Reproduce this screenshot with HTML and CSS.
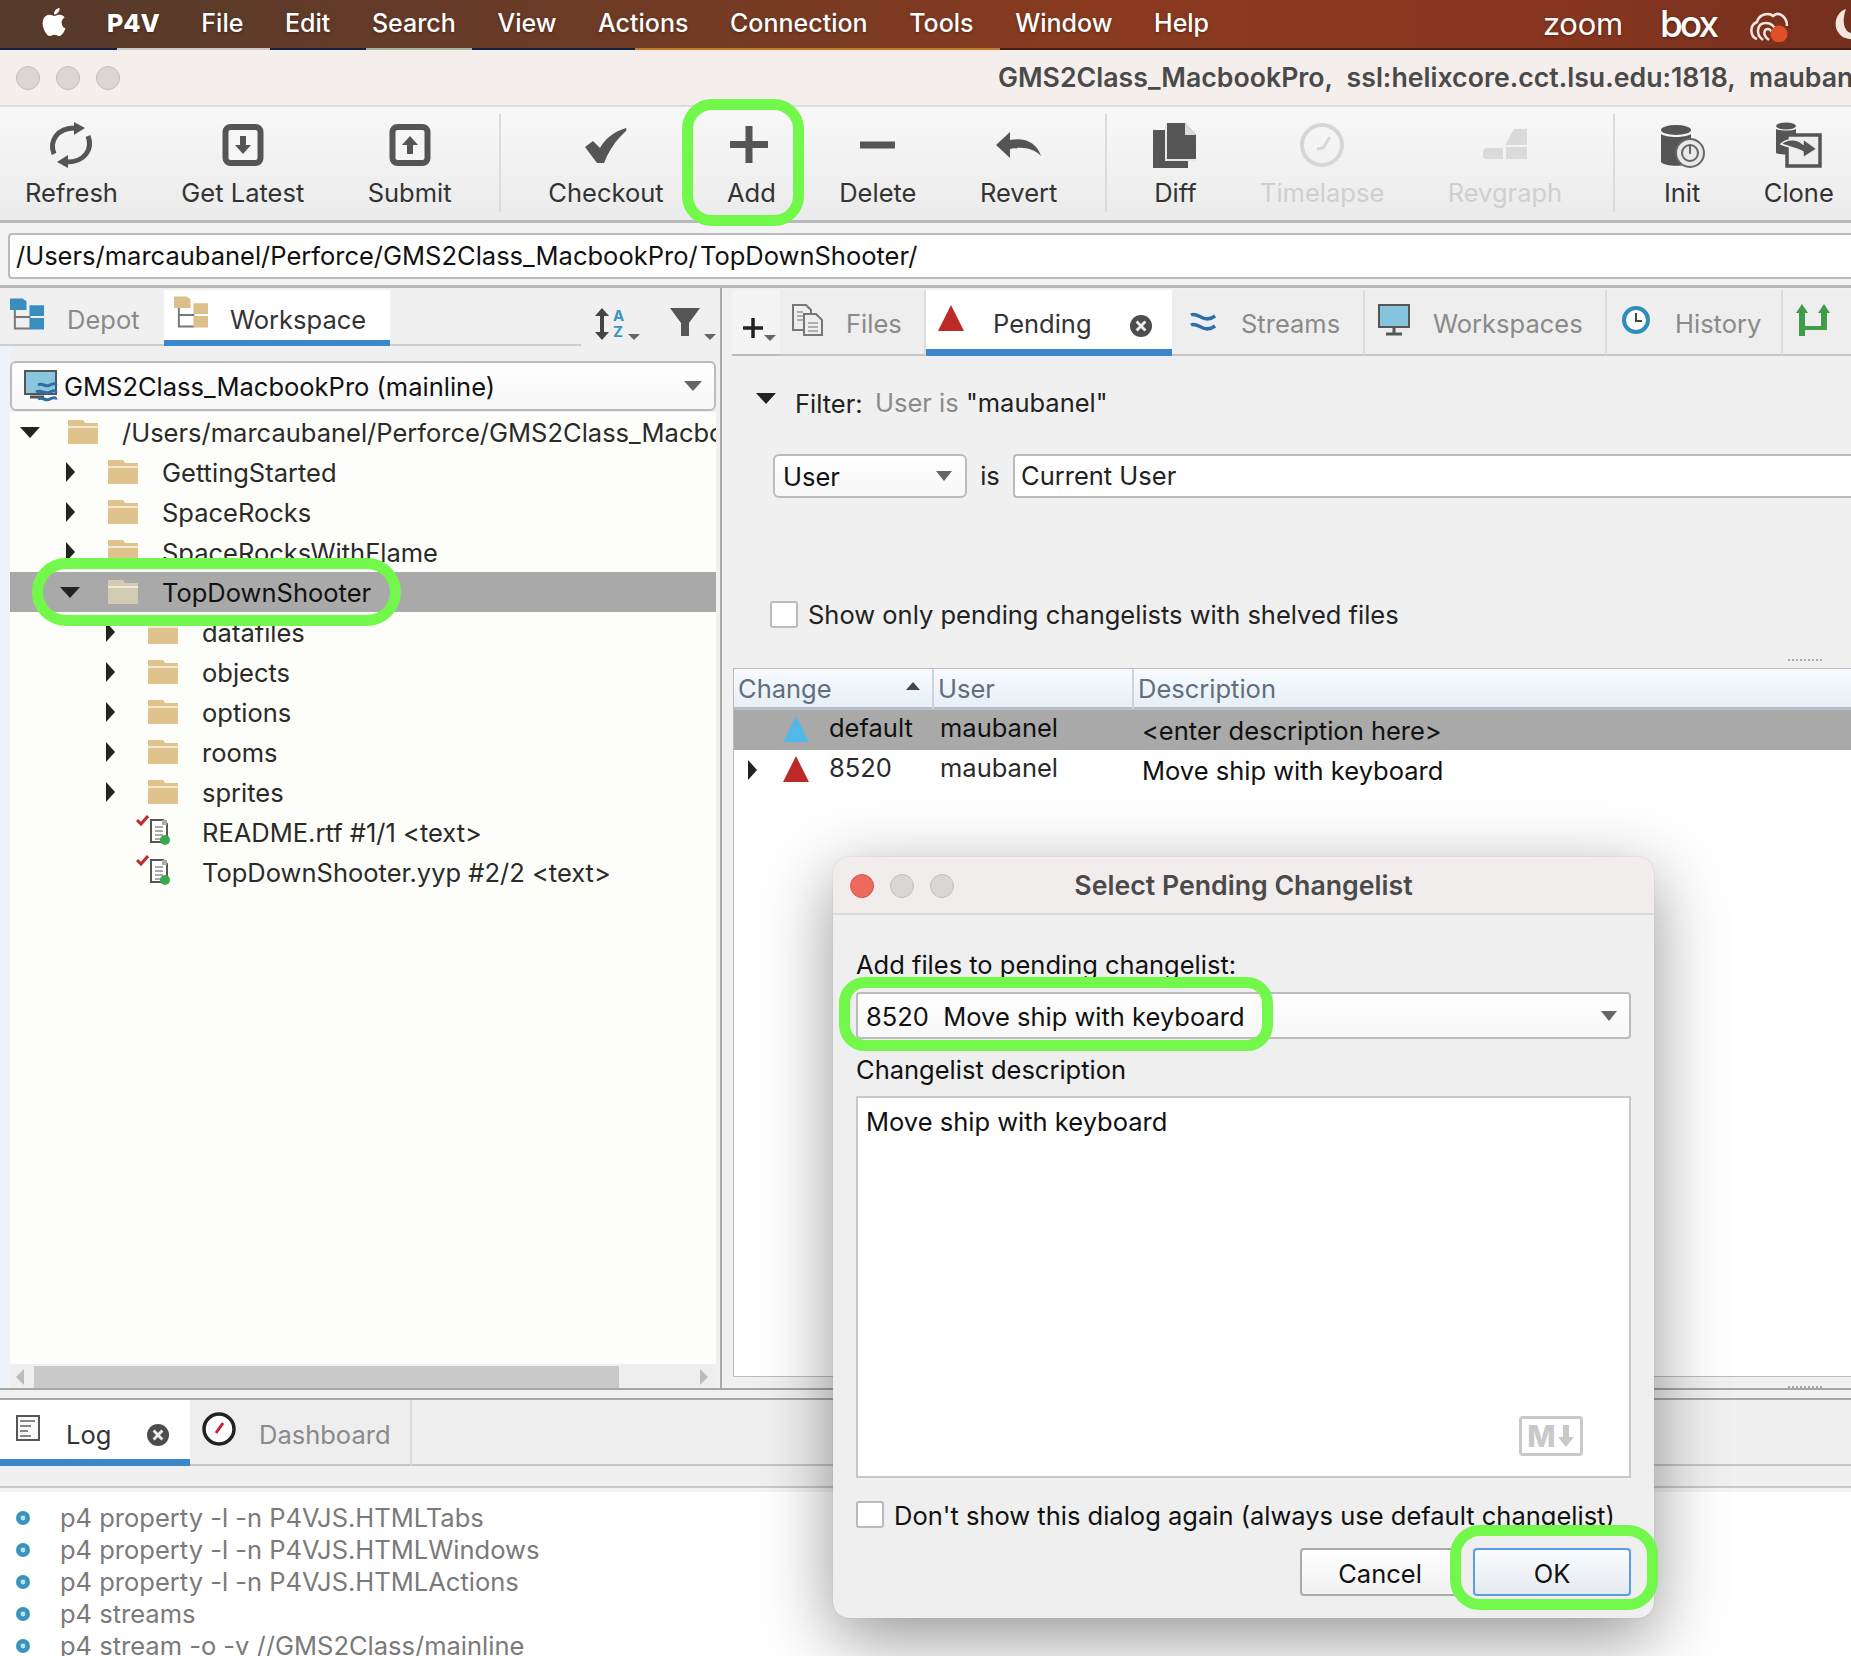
FILE: index.html
```html
<!DOCTYPE html>
<html lang="en">
<head>
  <meta charset="UTF-8" />
  <title>P4V</title>
  <link rel="stylesheet" href="styles.css">
</head>
<body>
  <svg class="sprites" xmlns="http://www.w3.org/2000/svg">
    <symbol id="folder" viewBox="0 0 30 24">
      <path d="M0 0h15l2 3h13v21H0z" fill="currentColor"/>
      <rect x="0" y="6" width="30" height="2" fill="#f3e8d2"/>
    </symbol>
    <symbol id="file" viewBox="0 0 34 36">
      <path d="M15 6h12l4 4v18H15z" fill="#fff" stroke="#555" stroke-width="2"/>
      <path d="M26 6h5v5h-5z" fill="#aaa"/>
      <path d="M19 13h8M19 17h8M19 21h8M19 25h6" stroke="#aaa" stroke-width="2"/>
      <path d="M1 6l4 4 7-8" fill="none" stroke="#c0282d" stroke-width="3"/>
      <circle cx="29" cy="26" r="5" fill="#3fa650"/>
    </symbol>
    <symbol id="close" viewBox="0 0 20 20">
      <circle cx="10" cy="10" r="10" fill="#4d4d4d"/>
      <path d="M6 6l8 8M14 6l-8 8" stroke="#eee" stroke-width="2.6"/>
    </symbol>
    <symbol id="tall-tri" viewBox="0 0 26 26">
      <path d="M13 0l13 26H0z" fill="currentColor"/>
    </symbol>
    <symbol id="tree" viewBox="0 0 36 33">
      <path d="M5 12v20h16M5 20h16" fill="none" stroke="#777" stroke-width="2"/>
      <path d="M0 1h13l4 3v9H0zM20 8h15v11H20zM20 21h15v12H20z" fill="currentColor"/>
    </symbol>
    <symbol id="bullet" viewBox="0 0 14 16">
      <circle cx="7" cy="8" r="7" fill="#3a93bc"/>
      <circle cx="7" cy="8" r="2.4" fill="#bfe0ee"/>
    </symbol>
    <symbol id="apple" viewBox="0 0 24 24">
      <path d="M12.152 6.896c-.948 0-2.415-1.078-3.96-1.04-2.04.027-3.91 1.183-4.961 3.014-2.117 3.675-.546 9.103 1.519 12.09 1.013 1.454 2.208 3.09 3.792 3.039 1.52-.065 2.09-.987 3.935-.987 1.831 0 2.35.987 3.96.948 1.637-.026 2.676-1.48 3.676-2.948 1.156-1.688 1.636-3.325 1.662-3.415-.039-.013-3.182-1.221-3.22-4.857-.026-3.04 2.48-4.494 2.597-4.559-1.429-2.09-3.623-2.324-4.39-2.376-2-.156-3.675 1.09-4.61 1.09zM15.53 3.83c.843-1.012 1.4-2.427 1.245-3.83-1.207.052-2.662.805-3.532 1.818-.78.896-1.454 2.338-1.273 3.714 1.338.104 2.715-.688 3.559-1.701" fill="currentColor"/>
    </symbol>
  </svg>

  <header class="menubar">
    <svg class="apple"><use href="#apple"/></svg>
    <nav class="menus">
      <span class="app-name">P4V</span>
      <span>File</span>
      <span>Edit</span>
      <span>Search</span>
      <span>View</span>
      <span>Actions</span>
      <span>Connection</span>
      <span>Tools</span>
      <span>Window</span>
      <span>Help</span>
    </nav>
    <div class="tray">
      <span class="tray-zoom">zoom</span>
      <span class="tray-box">box</span>
      <svg class="tray-cc" viewBox="0 0 40 32">
        <path d="M8 29C1 27 0 15 8 12 10 4 20 2 24 6 29 1 38 6 38 16" fill="none" stroke="#f3e6df" stroke-width="2.500"/>
        <path d="M14 30C6 24 8 13 17 13 22 13 26 17 28 22" fill="none" stroke="#f3e6df" stroke-width="2.500"/>
        <path d="M20 30C13 25 15 19 19 19 22 19 24 23 26 28" fill="none" stroke="#f3e6df" stroke-width="2.500"/>
        <circle cx="30" cy="24" r="8.500" fill="#e0502a"/>
      </svg>
      <svg class="tray-moon" viewBox="0 0 17 30">
        <path d="M12 0C2 3-1 16 4 23c3 5 8 7 13 7V24C11 23 7 14 12 0z" fill="#f3e6df"/>
      </svg>
    </div>
  </header>
  <div class="desk-strip"></div>

  <div class="titlebar">
    <div class="lights">
      <i class="light"></i><i class="light"></i><i class="light"></i>
    </div>
    <div class="window-title">GMS2Class_MacbookPro,&nbsp; ssl:helixcore.cct.lsu.edu:1818,&nbsp; maubanel</div>
  </div>

  <div class="toolbar">
    <div class="tool">
      <svg class="tool-icon" viewBox="0 0 48 46">
        <path d="M7 32C2 19 10 6 28 6" fill="none" stroke="#555" stroke-width="5"/>
        <path d="M27 0l11 6-11 7z" fill="#555"/>
        <path d="M41 14c5 13-3 26-21 26" fill="none" stroke="#555" stroke-width="5"/>
        <path d="M21 33l-11 7 11 6z" fill="#555"/>
      </svg>
      <span>Refresh</span>
    </div>
    <div class="tool">
      <svg class="tool-icon" viewBox="0 0 48 46">
        <rect x="6.500" y="5" width="35" height="36" rx="5" fill="#f6f6f6" stroke="#555" stroke-width="6"/>
        <path d="M21 14h6v9h5l-8 9-8-9h5z" fill="#555"/>
      </svg>
      <span>Get Latest</span>
    </div>
    <div class="tool">
      <svg class="tool-icon" viewBox="0 0 48 46">
        <rect x="6.500" y="5" width="35" height="36" rx="5" fill="#f6f6f6" stroke="#555" stroke-width="6"/>
        <path d="M21 32h6v-9h5l-8-9-8 9h5z" fill="#555"/>
      </svg>
      <span>Submit</span>
    </div>
    <div class="tool-sep"></div>
    <div class="tool">
      <svg class="tool-icon" viewBox="0 0 48 46">
        <path d="M3 25l8-6 7 7C23 17 31 10 44 6c1 2 0 3-1 4C33 19 27 29 22 41h-7z" fill="#555"/>
      </svg>
      <span>Checkout</span>
    </div>
    <div class="tool">
      <svg class="tool-icon" viewBox="0 0 48 46">
        <path d="M22 4v37M3 22.500h38" fill="none" stroke="#555" stroke-width="7"/>
      </svg>
      <span>Add</span>
    </div>
    <div class="tool">
      <svg class="tool-icon" viewBox="0 0 48 46">
        <path d="M6 23h35" fill="none" stroke="#555" stroke-width="7"/>
      </svg>
      <span>Delete</span>
    </div>
    <div class="tool">
      <svg class="tool-icon" viewBox="0 0 48 46">
        <path d="M1 23L15 10v8c15-3 27 3 31 16-7-7-17-10-31-7v9z" fill="#555"/>
      </svg>
      <span>Revert</span>
    </div>
    <div class="tool-sep"></div>
    <div class="tool">
      <svg class="tool-icon" viewBox="0 0 48 46">
        <path d="M2 8h13v30h22v8H2z" fill="#555"/>
        <path d="M15 1h19l11 12v25H15z" fill="#555"/>
        <path d="M15 1v37h30" fill="none" stroke="#e8e8e8" stroke-width="2"/>
        <path d="M34 1v12h11z" fill="#dcdcdc"/>
      </svg>
      <span>Diff</span>
    </div>
    <div class="tool tool-off">
      <svg class="tool-icon" viewBox="0 0 48 46">
        <circle cx="24" cy="23" r="20" fill="none" stroke="#d6d6d6" stroke-width="4"/>
        <path d="M19 27l6-1 7-11" fill="none" stroke="#d6d6d6" stroke-width="3"/>
      </svg>
      <span>Timelapse</span>
    </div>
    <div class="tool tool-off">
      <svg class="tool-icon" viewBox="0 0 48 46">
        <path d="M24 23l9-16h13v16z" fill="#dadada"/>
        <path d="M2 30c0-2 2-4 4-4h16v6H2zM25 25h21v12H25zM2 32h20v5H5c-2 0-3-2-3-3z" fill="#dadada"/>
      </svg>
      <span>Revgraph</span>
    </div>
    <div class="tool-sep tool-sep-last"></div>
    <div class="tool">
      <svg class="tool-icon" viewBox="0 0 48 46">
        <ellipse cx="18" cy="8" rx="15" ry="5" fill="#555"/>
        <path d="M3 12c5 4 25 4 30 0v28c-4 5-26 5-30 0z" fill="#555"/>
        <circle cx="32" cy="31" r="14" fill="#e9e9e9" stroke="#666" stroke-width="2"/>
        <circle cx="32" cy="31" r="8" fill="none" stroke="#666" stroke-width="2"/>
        <path d="M32 24v8" stroke="#666" stroke-width="2"/>
      </svg>
      <span>Init</span>
    </div>
    <div class="tool">
      <svg class="tool-icon" viewBox="0 0 48 46">
        <ellipse cx="11" cy="4" rx="10" ry="3.500" fill="#555"/>
        <path d="M1 7c4 2 16 2 20 0v24c-4 2-16 2-20 0z" fill="#555"/>
        <rect x="12" y="13" width="33" height="31" fill="#eee" stroke="#555" stroke-width="3.500"/>
        <path d="M6 22c7-6 16-5 22 0v-5l14 10-14 9v-6c-7-4-15-5-22-8z" fill="#555" stroke="#eee" stroke-width="1.500"/>
      </svg>
      <span>Clone</span>
    </div>
  </div>

  <div class="pathrow">
    <div class="path-input">/Users/marcaubanel/Perforce/GMS2Class_MacbookPro/&#8202;TopDownShooter/</div>
  </div>

  <main class="panes">
    <section class="left">
      <div class="left-tabs">
        <div class="tab tab-depot">
          <svg class="tree-icon tree-blue"><use href="#tree"/></svg>
          <span>Depot</span>
        </div>
        <div class="tab tab-workspace tab-on">
          <svg class="tree-icon tree-tan"><use href="#tree"/></svg>
          <span>Workspace</span>
        </div>
        <div class="tab-rest"></div>
        <div class="left-tools">
          <div class="sort">
            <svg class="sort-arrow" viewBox="0 0 16 32">
              <path d="M8 0l7 8h-5v16h5l-7 8-7-8h5V8H1z" fill="#444"/>
            </svg>
            <div class="az"><span>A</span><span>Z</span></div>
            <i class="arrow-down small"></i>
          </div>
          <div class="funnel">
            <svg class="funnel-icon" viewBox="0 0 30 28">
              <path d="M0 0h30L19 15v13h-8V15z" fill="#555"/>
            </svg>
            <i class="arrow-down small"></i>
          </div>
        </div>
      </div>

      <div class="combo left-combo">
        <svg class="combo-icon" viewBox="0 0 34 32">
          <rect x="1" y="1" width="31" height="23" fill="#8ac6de" stroke="#555" stroke-width="2"/>
          <path d="M6 27h14" stroke="#555" stroke-width="3"/>
          <path d="M14 15c5-3 7 3 12 0s5 0 7-1M12 22c5-3 9 3 14 0s5 0 7-1M14 29c5-3 7 3 12 0s5 0 7-1" fill="none" stroke="#2c6da6" stroke-width="3"/>
        </svg>
        <span>GMS2Class_MacbookPro (mainline)</span>
        <i class="arrow-down"></i>
      </div>

      <div class="tree">
        <div class="row lvl0">
          <i class="twist"><i class="arrow-down big"></i></i>
          <svg class="folder"><use href="#folder"/></svg>
          <span>/Users/marcaubanel/Perforce/GMS2Class_MacbookPro</span>
        </div>
        <div class="row lvl1">
          <i class="twist"><i class="arrow-right"></i></i>
          <svg class="folder"><use href="#folder"/></svg>
          <span>GettingStarted</span>
        </div>
        <div class="row lvl1">
          <i class="twist"><i class="arrow-right"></i></i>
          <svg class="folder"><use href="#folder"/></svg>
          <span>SpaceRocks</span>
        </div>
        <div class="row lvl1">
          <i class="twist"><i class="arrow-right"></i></i>
          <svg class="folder"><use href="#folder"/></svg>
          <span>SpaceRocksWithFlame</span>
        </div>
        <div class="row lvl1 row-on">
          <i class="twist"><i class="arrow-down big"></i></i>
          <svg class="folder"><use href="#folder"/></svg>
          <span>TopDownShooter</span>
        </div>
        <div class="row lvl2">
          <i class="twist"><i class="arrow-right"></i></i>
          <svg class="folder"><use href="#folder"/></svg>
          <span>datafiles</span>
        </div>
        <div class="row lvl2">
          <i class="twist"><i class="arrow-right"></i></i>
          <svg class="folder"><use href="#folder"/></svg>
          <span>objects</span>
        </div>
        <div class="row lvl2">
          <i class="twist"><i class="arrow-right"></i></i>
          <svg class="folder"><use href="#folder"/></svg>
          <span>options</span>
        </div>
        <div class="row lvl2">
          <i class="twist"><i class="arrow-right"></i></i>
          <svg class="folder"><use href="#folder"/></svg>
          <span>rooms</span>
        </div>
        <div class="row lvl2">
          <i class="twist"><i class="arrow-right"></i></i>
          <svg class="folder"><use href="#folder"/></svg>
          <span>sprites</span>
        </div>
        <div class="row row-file">
          <svg class="file-icon"><use href="#file"/></svg>
          <span>README.rtf #1/1 &lt;text&gt;</span>
        </div>
        <div class="row row-file">
          <svg class="file-icon"><use href="#file"/></svg>
          <span>TopDownShooter.yyp #2/2 &lt;text&gt;</span>
        </div>
      </div>

      <div class="hscroll">
        <div class="hscroll-btn"><i class="scroll-left"></i></div>
        <div class="hscroll-thumb"></div>
        <div class="hscroll-end"><i class="scroll-right"></i></div>
      </div>
    </section>

    <section class="right">
      <div class="right-tabs">
        <div class="tab-plus">
          <svg class="plus-icon" viewBox="0 0 20 22"><path d="M10 1v20M0 11h20" stroke="#222" stroke-width="3.500"/></svg>
          <i class="arrow-down small"></i>
        </div>
        <div class="rtab rtab-files">
          <svg class="rtab-icon" viewBox="0 0 32 32">
            <path d="M1 1h13l5 5v20H1z" fill="#eee" stroke="#777" stroke-width="2"/>
            <path d="M12 10h12l6 6v15H12z" fill="#eee" stroke="#777" stroke-width="2"/>
            <path d="M5 8h6M5 12h6M5 16h6M16 19h10M16 23h10M16 27h10" stroke="#999" stroke-width="1.500"/>
          </svg>
          <span>Files</span>
        </div>
        <div class="rtab rtab-pending rtab-on">
          <svg class="rtab-tri"><use href="#tall-tri"/></svg>
          <span>Pending</span>
          <svg class="tab-close"><use href="#close"/></svg>
        </div>
        <div class="rtab rtab-streams">
          <svg class="rtab-icon icon-streams" viewBox="0 0 26 20">
            <path d="M1 3c4-2 7 1 12 3s8 1 12-2M1 13c4-2 7 1 12 3s8 1 12-2" fill="none" stroke="#2b6ea8" stroke-width="3.500"/>
          </svg>
          <span>Streams</span>
        </div>
        <div class="rtab rtab-workspaces">
          <svg class="rtab-icon icon-monitor" viewBox="0 0 32 32">
            <rect x="1" y="1" width="30" height="22" fill="#86c4dd" stroke="#555" stroke-width="2"/>
            <path d="M16 23v6M8 30h16" stroke="#555" stroke-width="3"/>
          </svg>
          <span>Workspaces</span>
        </div>
        <div class="rtab rtab-history">
          <svg class="rtab-icon icon-clock" viewBox="0 0 28 28">
            <circle cx="14" cy="14" r="12" fill="#fff" stroke="#2e8ebb" stroke-width="4"/>
            <path d="M14 7v8h6" fill="none" stroke="#444" stroke-width="2"/>
          </svg>
          <span>History</span>
        </div>
        <div class="rtab rtab-branch">
          <svg class="rtab-icon icon-branch" viewBox="0 0 34 32">
            <path d="M6 0l6 9H9v13h16V9h-3l6-9 6 9h-3v17H9v6H3V9H0z" fill="#3f9c4b"/>
          </svg>
        </div>
      </div>

      <div class="filter-line">
        <i class="arrow-down big"></i>
        <span class="filter-word">Filter:</span>
        <span class="filter-value"><em>User is</em> "maubanel"</span>
      </div>

      <div class="filter-form">
        <div class="combo user-combo">
          <span>User</span>
          <i class="arrow-down"></i>
        </div>
        <span class="is-word">is</span>
        <div class="user-input">Current User</div>
      </div>

      <label class="check-line shelved">
        <i class="check"></i>
        <span>Show only pending changelists with shelved files</span>
      </label>

      <div class="grip"></div>

      <div class="table">
        <div class="thead">
          <div class="th th-change">Change<i class="sort-up"></i></div>
          <div class="th">User</div>
          <div class="th th-desc">Description</div>
        </div>
        <div class="tr tr-on">
          <div class="td td-change">
            <i class="td-twist"></i>
            <svg class="cl-tri cl-blue"><use href="#tall-tri"/></svg>
            <span>default</span>
          </div>
          <div class="td">maubanel</div>
          <div class="td td-desc">&lt;enter description here&gt;</div>
        </div>
        <div class="tr">
          <div class="td td-change">
            <i class="td-twist"><i class="arrow-right"></i></i>
            <svg class="cl-tri cl-red"><use href="#tall-tri"/></svg>
            <span>8520</span>
          </div>
          <div class="td">maubanel</div>
          <div class="td td-desc">Move ship with keyboard</div>
        </div>
      </div>

      <div class="grip grip-low"></div>
    </section>
  </main>

  <section class="bottom">
    <div class="bottom-tabs">
      <div class="btab btab-log">
        <svg class="btab-doc" viewBox="0 0 24 26">
          <rect x="1" y="1" width="22" height="24" fill="#fafafa" stroke="#555" stroke-width="2"/>
          <path d="M4 6h15M4 11h11M4 16h8M4 21h11" stroke="#888" stroke-width="2"/>
        </svg>
        <span>Log</span>
        <svg class="tab-close"><use href="#close"/></svg>
      </div>
      <div class="btab btab-dash">
        <svg class="btab-gauge" viewBox="0 0 34 34">
          <circle cx="17" cy="17" r="15" fill="#fff" stroke="#222" stroke-width="3.500"/>
          <path d="M14 21l7-10" stroke="#c0282d" stroke-width="3"/>
        </svg>
        <span>Dashboard</span>
      </div>
      <div class="btab-rest"></div>
    </div>
    <div class="bottom-strip"></div>
    <div class="log">
      <div class="log-line"><svg class="bullet"><use href="#bullet"/></svg><span>p4 property -l -n P4VJS.HTMLTabs</span></div>
      <div class="log-line"><svg class="bullet"><use href="#bullet"/></svg><span>p4 property -l -n P4VJS.HTMLWindows</span></div>
      <div class="log-line"><svg class="bullet"><use href="#bullet"/></svg><span>p4 property -l -n P4VJS.HTMLActions</span></div>
      <div class="log-line"><svg class="bullet"><use href="#bullet"/></svg><span>p4 streams</span></div>
      <div class="log-line"><svg class="bullet"><use href="#bullet"/></svg><span>p4 stream -o -v //GMS2Class/mainline</span></div>
    </div>
  </section>

  <div class="dialog">
    <div class="dialog-head">
      <div class="lights">
        <i class="light light-red"></i><i class="light"></i><i class="light"></i>
      </div>
      <div class="dialog-title">Select Pending Changelist</div>
    </div>
    <div class="dialog-body">
      <div class="dialog-label first">Add files to pending changelist:</div>
      <div class="combo dialog-combo">
        <span class="keep-space">8520  Move ship with keyboard</span>
        <i class="arrow-down"></i>
      </div>
      <div class="dialog-label">Changelist description</div>
      <div class="dialog-text">
        Move ship with keyboard
        <div class="md-badge">
          <svg class="md-arrow" viewBox="0 0 18 24"><path d="M6 1h6v12h5l-8 10-8-10h5z" fill="#c9c9c9"/></svg>
          <span>M</span>
        </div>
      </div>
      <label class="check-line dialog-check">
        <i class="check"></i>
        <span>Don't show this dialog again (always use default changelist)</span>
      </label>
      <div class="dialog-buttons">
        <button class="btn">Cancel</button>
        <button class="btn btn-ok">OK</button>
      </div>
    </div>
  </div>

  <!-- green callouts drawn over the screenshot -->
  <div class="mark mark-add"></div>
  <div class="mark mark-folder"></div>
  <div class="mark mark-combo"></div>
  <div class="mark mark-ok"></div>
</body>
</html>
```

FILE: styles.css
```css
* { box-sizing: border-box; }
html, body { margin: 0; padding: 0; }
body {
  position: relative;
  width: 1851px;
  height: 1656px;
  overflow: hidden;
  background: #f0f0f0;
  color: #222;
  font-family: Inter, "Noto Sans", sans-serif;
  font-size: 25.5px;
  line-height: 32px;
}
i { display: block; font-style: normal; }
em { font-style: normal; }
.sprites { display: none; }

/* mac menu bar */
.menubar {
  display: flex;
  align-items: center;
  height: 48px;
  padding-left: 40px;
  color: #fff;
  font-size: 25px;
  background: linear-gradient(90deg, #553a2b 0%, #6b3b26 30%, #8a3a1f 60%, #86361f 85%, #74301f 100%);
  text-shadow: 0 1px 3px rgba(0,0,0,.35);
}
.apple { width: 28px; height: 32px; color: #fff; margin-top: -4px; }
.menus { display: flex; gap: 41.600px; margin: -2px 0 0 39px; font-weight: 500; }
.app-name { font-weight: 800; }
.tray { display: flex; align-items: center; margin-left: auto; }
.tray-zoom { font-size: 31px; font-weight: 400; letter-spacing: -.3px; width: 117px; }
.tray-box { font-size: 37px; font-weight: 500; letter-spacing: -3px; width: 88px; line-height: 40px; }
.tray-cc { width: 42px; height: 32px; margin-top: 4px; }
.tray-moon { width: 17px; height: 30px; margin-left: 44px; }
.desk-strip {
  height: 2px;
  background: linear-gradient(90deg, #12223f 0 117px, #c9c9c9 117px 270px, #12223f 270px 366px, #a7b5a0 366px 472px, #12223f 472px 635px, #c27b2f 635px 1000px, #4a1c10 1000px);
}

/* window title */
.titlebar {
  display: flex;
  align-items: center;
  height: 57px;
  background: #f4efec;
  border-bottom: 2px solid #dcdcdc;
  border-top-left-radius: 12px;
}
.lights { display: flex; gap: 16px; padding-left: 16px; }
.light {
  width: 24px;
  height: 24px;
  border-radius: 50%;
  background: #dad6d3;
  border: 1px solid #c3bfbc;
}
.light-red { background: #ee6a5e; border-color: #d9534a; }
.window-title {
  margin: 0 0 2px 878px;
  font-size: 26.700px;
  font-weight: 600;
  color: #4a4a4a;
  white-space: nowrap;
}

/* toolbar */
.toolbar {
  display: flex;
  height: 116px;
  padding: 0 0 0 25px;
  gap: 63.400px;
  background: linear-gradient(#f8f8f8, #ebebeb);
  border-bottom: 3px solid #b8b8b8;
}
.tool {
  display: flex;
  flex-direction: column;
  align-items: center;
  padding-top: 15px;
  white-space: nowrap;
  color: #333;
}
.tool-icon { width: 48px; height: 46px; margin: 0 -10px 9px; flex: none; }
.tool-off { color: #cfcfcf; }
.tool-sep {
  width: 2px;
  margin: 7px -16px 8px -16px;
  background: #dcdcdc;
}
.tool-sep-last { margin-left: -13px; margin-right: -14px; }

.pathrow {
  height: 65px;
  padding: 10px 0 0 8px;
  background: #f3f3f3;
  border-bottom: 3px solid #b8b8b8;
}
.path-input {
  height: 46px;
  padding-left: 6px;
  line-height: 42px;
  background: #fff;
  border: 2px solid #bbb;
  border-right: 0;
  border-radius: 4px 0 0 4px;
  color: #111;
  white-space: nowrap;
}

/* two panes */
.panes {
  display: flex;
  height: 1102px;
  border-bottom: 2px solid #a5a5a5;
}
.left {
  display: flex;
  flex-direction: column;
  width: 720px;
  background: linear-gradient(90deg, #eef2f9 0 10px, #f0f0f0 10px);
}
.left-tabs {
  display: flex;
  height: 58px;
  padding-top: 2px;
  background: #f0f0f0;
}
.tab {
  display: flex;
  align-items: center;
  padding-left: 10px;
  color: #8a8a8a;
  border-bottom: 2px solid #cfcfcf;
}
.tab span { padding-top: 5px; }
.tab-depot { width: 164px; gap: 22px; }
.tab-workspace { width: 226px; gap: 21px; }
.tab-on { background: #fff; color: #333; border-bottom: 6px solid #3a87cb; }
.tab-on span { padding-top: 9px; }
.tab-rest { width: 191px; border-bottom: 2px solid #cfcfcf; }
.tree-icon { width: 35px; height: 33px; margin-top: -8px; }
.tree-blue { color: #3a8dbf; }
.tree-tan { color: #dcc08c; }
.left-tools { display: flex; padding: 18px 0 0 13px; gap: 30px; }
.sort { display: flex; align-items: flex-start; }
.sort-arrow { width: 16px; height: 32px; }
.az {
  display: flex;
  flex-direction: column;
  margin-left: 3px;
  color: #3a93c4;
  font-size: 15px;
  font-weight: 700;
  line-height: 16px;
}
.funnel { display: flex; align-items: flex-start; }
.funnel-icon { width: 30px; height: 28px; }

.arrow-down {
  width: 0;
  height: 0;
  border-left: 9px solid transparent;
  border-right: 9px solid transparent;
  border-top: 10px solid #666;
}
.arrow-down.small {
  margin-top: 26px;
  margin-left: 4px;
  border-left-width: 6px;
  border-right-width: 6px;
  border-top-width: 6px;
}
.arrow-down.big {
  border-left-width: 10px;
  border-right-width: 10px;
  border-top-width: 11px;
  border-top-color: #222;
}
.arrow-right {
  width: 0;
  height: 0;
  border-top: 10px solid transparent;
  border-bottom: 10px solid transparent;
  border-left: 9px solid #222;
}

.combo {
  display: flex;
  align-items: center;
  background: linear-gradient(#fff, #f7f7f7);
  border: 2px solid #bbb;
  border-radius: 6px;
  color: #111;
  white-space: nowrap;
}
.combo span { padding-top: 2px; }
.combo .arrow-down { margin-left: auto; }
.left-combo {
  height: 50px;
  margin: 15px 4px 1px 10px;
  padding: 0 12px 0 12px;
  flex: none;
}
.combo-icon { width: 34px; height: 32px; margin-right: 6px; flex: none; }

.tree {
  flex: 1;
  margin: 0 4px 2px 10px;
  background: #fdfef9;
  overflow: hidden;
}
.row {
  display: flex;
  align-items: center;
  height: 40px;
  white-space: nowrap;
  color: #2a2a2a;
}
.row span { flex: none; padding-top: 2px; }
.twist { display: flex; justify-content: center; width: 20px; flex: none; }
.folder { width: 30px; height: 24px; color: #dfc28c; flex: none; margin-left: 28px; margin-right: 24px; }
.lvl0 { padding-left: 10px; }
.lvl1 { padding-left: 50px; }
.lvl2 { padding-left: 90px; }
.row-on { background: #a9a9a9; color: #111; }
.row-on .folder { color: #d3ccb4; }
.row-file { padding-left: 126px; }
.file-icon { width: 34px; height: 36px; margin-right: 32px; flex: none; }

.hscroll {
  display: flex;
  height: 22px;
  margin: 0 4px 0 10px;
  background: #eee;
  flex: none;
}
.hscroll-btn { display: flex; align-items: center; padding-left: 6px; width: 24px; }
.hscroll-thumb { width: 585px; background: #c9c9c9; }
.hscroll-end { display: flex; align-items: center; justify-content: flex-end; flex: 1; padding-right: 8px; }
.scroll-left, .scroll-right {
  width: 0;
  height: 0;
  border-top: 8px solid transparent;
  border-bottom: 8px solid transparent;
}
.scroll-left { border-right: 8px solid #bbb; }
.scroll-right { border-left: 8px solid #bbb; }

.right {
  display: flex;
  flex-direction: column;
  flex: 1;
  min-width: 0;
  border-left: 2px solid #ababab;
  background: #f0f0f0;
}
.right-tabs {
  display: flex;
  height: 68px;
  padding: 2px 0 0 10px;
  flex: none;
}
.tab-plus {
  display: flex;
  width: 48px;
  padding: 27px 0 0 11px;
  border-bottom: 2px solid #bbb;
  background: #f4f4f4;
}
.plus-icon { width: 20px; height: 22px; flex: none; }
.tab-plus .arrow-down.small { margin: 18px 0 0 1px; }
.rtab {
  display: flex;
  align-items: center;
  color: #8a8a8a;
  background: #eeeeee;
  border-right: 2px solid #dcdcdc;
  border-bottom: 2px solid #c4c4c4;
  white-space: nowrap;
}
.rtab span { padding-top: 4px; }
.rtab-on { background: #fff; color: #333; border-right: 0; border-bottom: 7px solid #3a87cb; }
.rtab-on span { padding-top: 9px; }
.rtab-icon { flex: none; margin-top: -4px; }
.rtab-files { width: 146px; padding-left: 12px; gap: 22px; }
.rtab-files .rtab-icon { width: 32px; height: 32px; }
.rtab-pending { width: 246px; padding-left: 12px; }
.rtab-tri { width: 26px; height: 26px; color: #bb2a26; margin-right: 29px; margin-top: -4px; flex: none; }
.rtab-pending .tab-close { margin: 12px 0 0 38px; }
.tab-close { width: 22px; height: 22px; flex: none; }
.rtab-streams { width: 193px; padding-left: 18px; gap: 25px; }
.icon-streams { width: 26px; height: 20px; margin-top: 0; }
.rtab-workspaces { width: 242px; padding-left: 13px; gap: 23px; }
.icon-monitor { width: 32px; height: 32px; }
.rtab-history { width: 176px; padding-left: 15px; gap: 25px; }
.icon-clock { width: 28px; height: 28px; }
.rtab-branch { flex: 1; padding-left: 13px; border-right: 0; }
.icon-branch { width: 34px; height: 32px; }

.filter-line {
  display: flex;
  align-items: center;
  height: 30px;
  margin: 32px 0 0 34px;
  white-space: nowrap;
}
.filter-line span { padding-top: 2px; }
.filter-line .arrow-down.big { margin-top: -10px; }
.filter-word { margin-left: 19px; width: 80px; }
.filter-value { margin-top: -2px; }
.filter-value em { color: #8a8a8a; }
.filter-form {
  display: flex;
  align-items: center;
  height: 44px;
  margin: 36px 0 0 51px;
}
.user-combo { width: 194px; height: 44px; padding: 0 13px 0 8px; }
.user-combo .arrow-down { border-left-width: 8px; border-right-width: 8px; }
.is-word { width: 46px; text-align: center; }
.user-input {
  flex: 1;
  height: 44px;
  padding-left: 6px;
  line-height: 40px;
  background: #fff;
  border: 2px solid #bbb;
  border-right: 0;
  border-radius: 4px 0 0 4px;
}
.check-line { display: flex; align-items: center; white-space: nowrap; }
.check {
  width: 28px;
  height: 27px;
  background: #fff;
  border: 2px solid #bbb;
  border-radius: 3px;
  flex: none;
}
.shelved { gap: 10px; margin: 103px 0 0 48px; height: 27px; }
.grip {
  align-self: flex-end;
  width: 34px;
  height: 2px;
  margin: 31px 29px 7px 0;
  border-top: 2px dotted #aaa;
  flex: none;
}
.grip-low { margin: 9px 29px 0 0; }

.table {
  flex: 1;
  margin-left: 11px;
  background: #fff;
  border: 1px solid #bbb;
  border-right: 0;
}
.thead {
  display: grid;
  grid-template-columns: 200px 200px 1fr;
  height: 41px;
  background: linear-gradient(#f8fbff, #e6eff7);
  border-bottom: 3px solid #b7c0c7;
}
.th {
  padding-left: 4px;
  line-height: 40px;
  color: #5f6f7c;
  border-right: 2px solid #cdd5dc;
}
.th-desc { border-right: 0; }
.th-change { display: flex; align-items: center; justify-content: space-between; padding-right: 12px; }
.sort-up {
  width: 0;
  height: 0;
  margin-top: -6px;
  border-left: 7px solid transparent;
  border-right: 7px solid transparent;
  border-bottom: 8px solid #444;
}
.tr {
  display: grid;
  grid-template-columns: 200px 205px 1fr;
  height: 40px;
  align-items: center;
  white-space: nowrap;
  color: #2a2a2a;
}
.tr-on { background: #a9a9a9; color: #111; }
.td { padding-left: 6px; margin-top: -4px; }
.td-change { display: flex; align-items: center; padding-left: 14px; margin-top: 0; }
.td-change span { margin-top: -4px; }
.td-twist { width: 10px; }
.cl-tri { width: 26px; height: 26px; margin: -2px 20px 0 25px; flex: none; }
.cl-blue { color: #52b8e8; }
.cl-red { color: #bb2a26; }
.td-desc { padding-left: 3px; margin-top: 2px; color: #111; }

/* bottom log area */
.bottom { margin-top: 8px; border-top: 2px solid #a8a8a8; }
.bottom-tabs { display: flex; height: 66px; }
.btab { display: flex; align-items: center; white-space: nowrap; }
.btab span { padding-top: 5px; }
.btab-log {
  width: 190px;
  padding-left: 16px;
  background: #fff;
  color: #333;
  border-bottom: 7px solid #3a87cb;
}
.btab-log span { padding-top: 11px; }
.btab-doc { width: 24px; height: 26px; margin-right: 26px; margin-top: -4px; flex: none; }
.btab-log .tab-close { margin: 10px 0 0 36px; }
.btab-dash {
  width: 222px;
  padding-left: 12px;
  gap: 23px;
  color: #8a8a8a;
  background: #eeeeee;
  border-right: 2px solid #dcdcdc;
  border-bottom: 2px solid #c4c4c4;
}
.btab-gauge { width: 34px; height: 34px; margin-top: -6px; flex: none; }
.btab-rest { flex: 1; border-bottom: 2px solid #c4c4c4; }
.bottom-strip {
  height: 22px;
  background: #f0f0f0;
  border-bottom: 2px solid #c8c8c8;
}
.log { padding: 14px 0 0 16px; background: linear-gradient(#f3f3f3 0 4px, #fff 4px); height: 200px; margin-top: 0; }
.log-line { display: flex; align-items: center; height: 32px; color: #7a7a7a; white-space: nowrap; }
.bullet { width: 14px; height: 16px; margin-right: 30px; flex: none; }

/* select changelist window */
.dialog {
  position: absolute;
  left: 833px;
  top: 857px;
  display: flex;
  flex-direction: column;
  width: 821px;
  height: 761px;
  background: #efefef;
  border-radius: 16px;
  box-shadow: 0 0 1px #999, 0 20px 70px rgba(0,0,0,.42);
}
.dialog-head {
  position: relative;
  display: flex;
  align-items: center;
  justify-content: center;
  height: 58px;
  background: #f2eded;
  border-bottom: 2px solid #dcd8d8;
  border-radius: 16px 16px 0 0;
}
.dialog-head .lights { position: absolute; left: 1px; top: 17px; }
.dialog-title { font-size: 26.700px; font-weight: 600; color: #4a4a4a; }
.dialog-body { padding: 0 23px; }
.dialog-label { margin-top: 14px; padding-top: 1px; height: 32px; white-space: nowrap; color: #111; }
.dialog-label.first { margin-top: 34px; padding-top: 0; }
.dialog-combo {
  height: 47px;
  margin-top: 11px;
  padding: 0 10px 0 8px;
  border-radius: 4px;
}
.dialog-combo .arrow-down { border-left-width: 8px; border-right-width: 8px; margin-right: 2px; }
.keep-space { white-space: pre; }
.dialog-text {
  position: relative;
  height: 382px;
  margin-top: 11px;
  padding: 8px 8px;
  background: #fff;
  border: 2px solid #c8c8c8;
  color: #111;
}
.md-badge {
  position: absolute;
  right: 46px;
  bottom: 20px;
  display: flex;
  flex-direction: row-reverse;
  align-items: center;
  justify-content: center;
  gap: 1px;
  width: 64px;
  height: 40px;
  border: 3px solid #c9c9c9;
  border-radius: 4px;
  color: #c9c9c9;
  font-size: 30px;
  font-weight: 800;
}
.md-arrow { width: 18px; height: 24px; }
.dialog-check { gap: 10px; margin-top: 23px; height: 27px; color: #111; }
.dialog-check span { padding-top: 2px; }
.dialog-buttons { display: flex; justify-content: flex-end; gap: 13px; margin-top: 20px; }
.btn {
  width: 160px;
  height: 48px;
  padding: 3px 0 0;
  background: linear-gradient(#fff, #f1f1f1);
  border: 2px solid #aaa;
  border-radius: 4px;
  color: #111;
  font: inherit;
}
.btn-ok {
  width: 158px;
  background: linear-gradient(#fafcfe, #e5eaef);
  border-color: #5a9ee8;
}

/* green callouts */
.mark {
  position: absolute;
  border: 11px solid #72f74b;
  border-radius: 30px;
}
.mark-add { left: 682px; top: 99px; width: 122px; height: 127px; }
.mark-folder { left: 32px; top: 558px; width: 369px; height: 68px; border-radius: 34px; }
.mark-combo { left: 839px; top: 977px; width: 434px; height: 74px; border-radius: 26px; }
.mark-ok { left: 1450px; top: 1525px; width: 208px; height: 85px; }
```
